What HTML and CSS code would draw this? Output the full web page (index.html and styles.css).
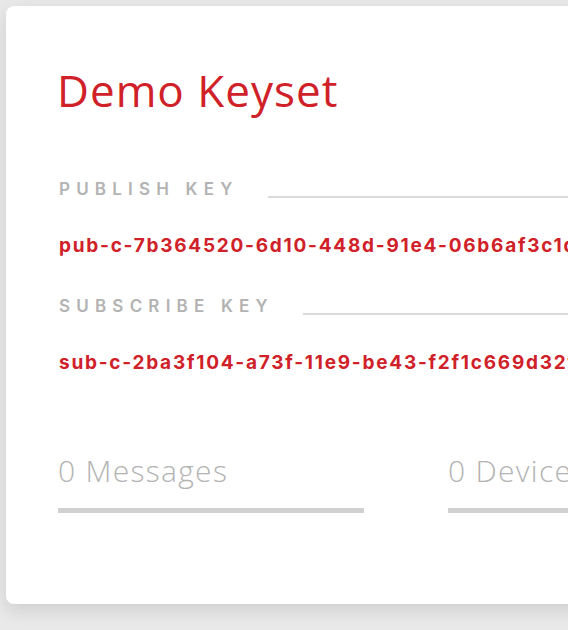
FILE: index.html
```html
<!DOCTYPE html>
<html>
<head>
<meta charset="utf-8">
<link rel="stylesheet" href="styles.css">
</head>
<body>
<div class="card">
  <h1 class="title">Demo Keyset</h1>
  <div class="key-block">
    <div class="label-row"><span class="label">PUBLISH KEY</span><span class="rule"></span></div>
    <div class="key">pub-c-7b364520-6d10-448d-91e4-06b6af3c1d2e</div>
  </div>
  <div class="key-block second">
    <div class="label-row"><span class="label">SUBSCRIBE KEY</span><span class="rule"></span></div>
    <div class="key">sub-c-2ba3f104-a73f-11e9-be43-f2f1c669d32f</div>
  </div>
  <div class="stats">
    <div class="stat"><div class="stat-value">0 Messages</div><div class="bar"></div></div>
    <div class="stat"><div class="stat-value">0 Devices</div><div class="bar"></div></div>
  </div>
</div>
</body>
</html>
```
FILE: styles.css
```css
html, body {
  margin: 0;
  padding: 0;
}
body {
  background: #e9e9e9;
  width: 568px;
  height: 630px;
  overflow: hidden;
  padding: 6px 0 0 6px;
  box-sizing: border-box;
  font-family: "Open Sans", "Liberation Sans", sans-serif;
}
.card {
  width: 800px;
  height: 598px;
  background: #fff;
  border-radius: 8px;
  box-shadow: 0 6px 18px rgba(0, 0, 0, 0.12);
  padding: 58px 0 0 53px;
  box-sizing: border-box;
}
.title {
  margin: 0 0 0 -2px;
  font-size: 44px;
  font-weight: 400;
  letter-spacing: 1px;
  color: #d02129;
  line-height: 52px;
}
.key-block {
  margin-top: 63px;
}
.key-block.second {
  margin-top: 38px;
}
.label-row {
  display: flex;
  align-items: flex-start;
  height: 20px;
}
.label {
  font-family: "Inter", "Open Sans", sans-serif;
  font-size: 17px;
  font-weight: 600;
  letter-spacing: 6.2px;
  line-height: 20px;
  color: #b3b3b3;
  white-space: nowrap;
}
.rule {
  flex: 1;
  height: 2px;
  background: #dadada;
  margin-left: 29px;
  margin-top: 17px;
}
.key {
  margin-top: 35px;
  font-family: "Inter", "Open Sans", sans-serif;
  font-size: 19px;
  font-weight: 700;
  letter-spacing: 1.75px;
  color: #d02129;
  white-space: nowrap;
  line-height: 24px;
}
.stats {
  display: grid;
  grid-template-columns: 306px 306px;
  column-gap: 84px;
  margin: 78px 0 0 -1px;
}
.stat-value {
  font-size: 30px;
  font-weight: 300;
  letter-spacing: 1.3px;
  color: #b3b3b3;
  line-height: 36px;
  white-space: nowrap;
}
.bar {
  height: 5px;
  background: #d1d1d1;
  margin-top: 19px;
}
```
